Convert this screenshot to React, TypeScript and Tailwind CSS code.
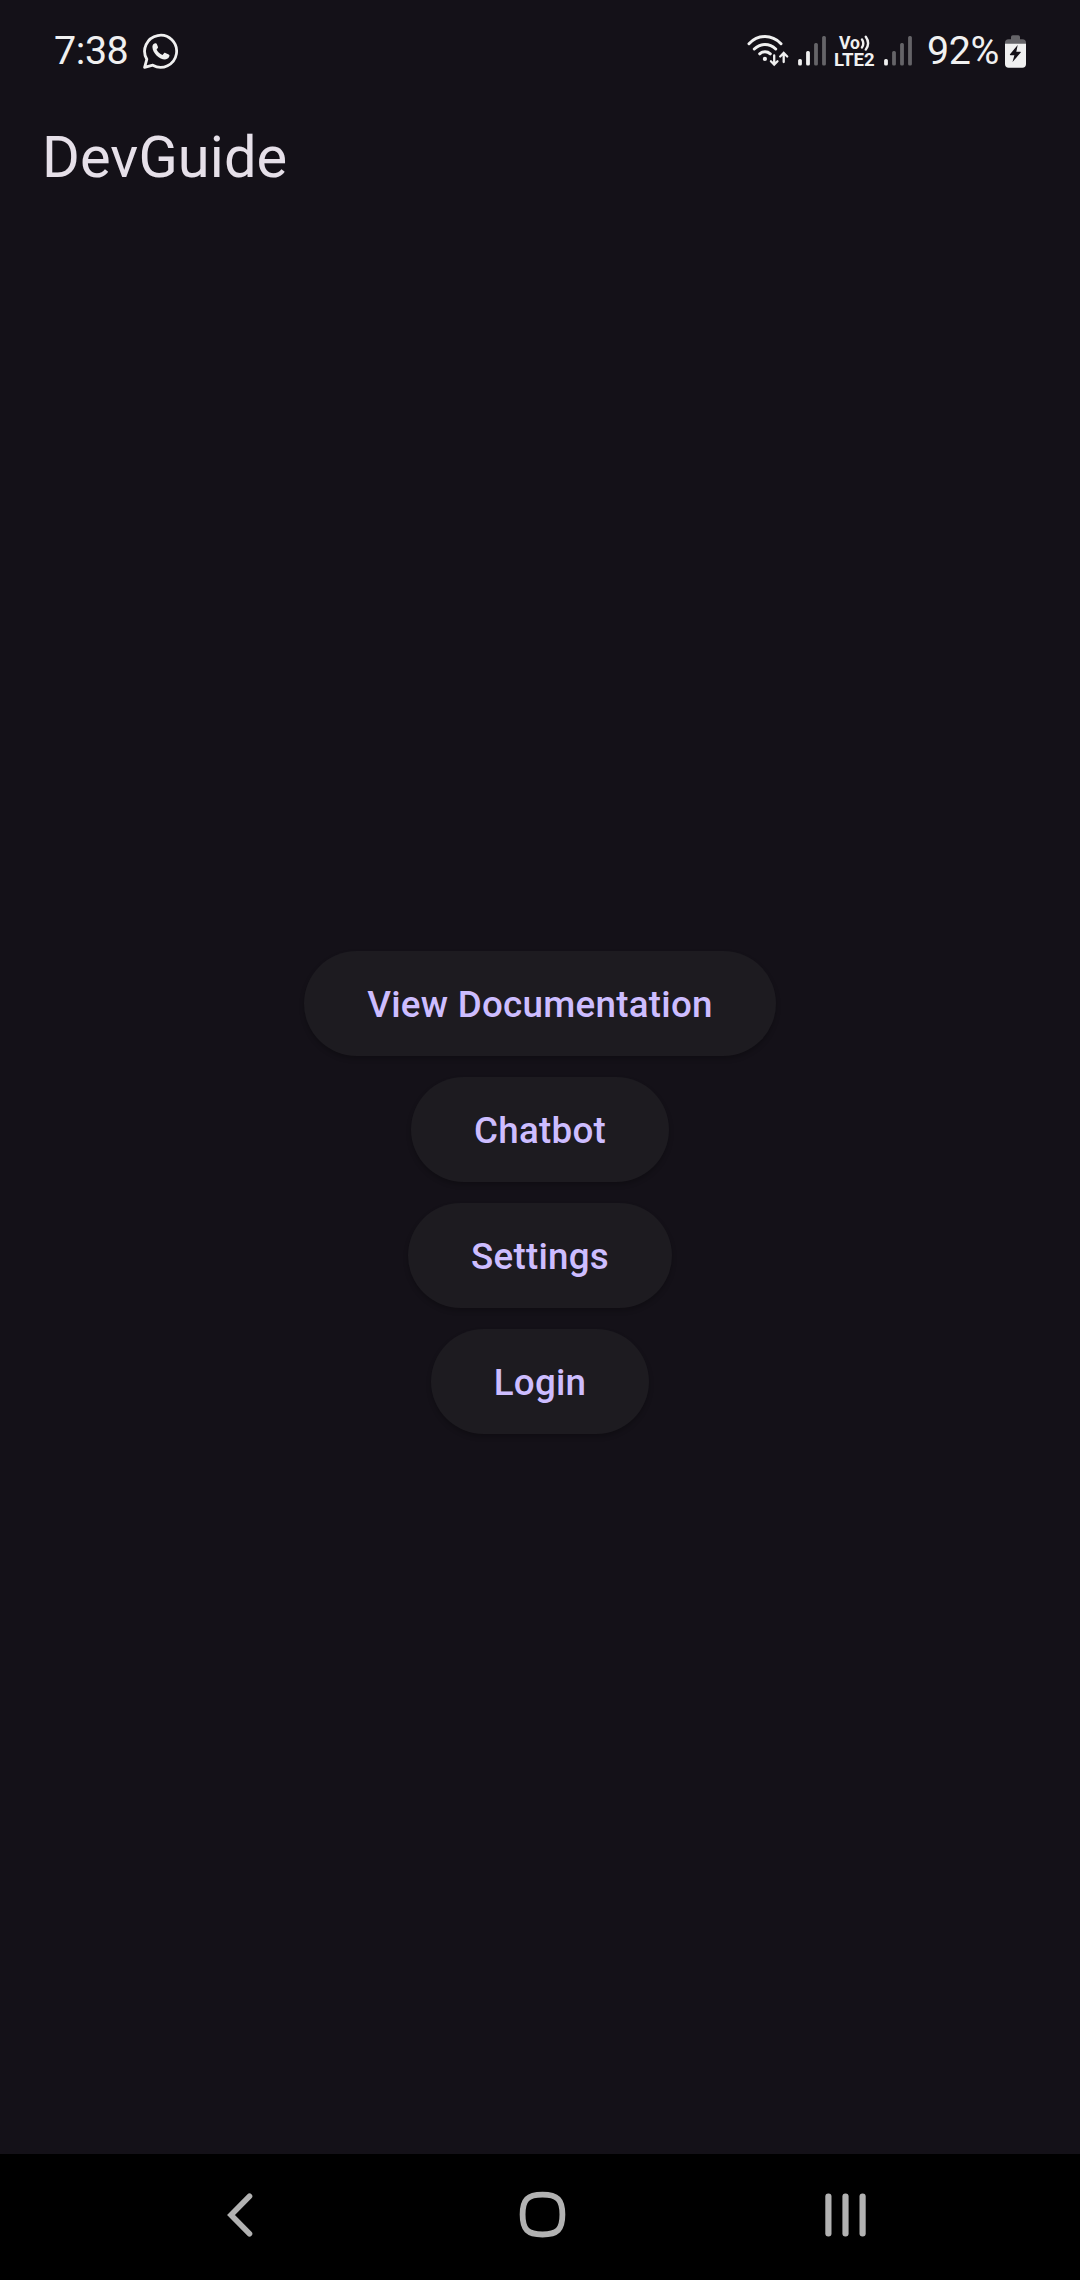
const actions = ["View Documentation", "Chatbot", "Settings", "Login"];

function WhatsAppIcon() {
  return (
    <svg className="h-[36px] w-[36px]" viewBox="0 0 36 36" fill="none">
      <path
        d="M1.6 34.3 L3.8 26.3 A16 16 0 1 1 9.8 32.2 Z"
        stroke="#f0f0f0"
        strokeWidth="2.8"
        strokeLinejoin="round"
      />
      <path
        d="M12.2 10.2C10.4 10.4 9.3 12 9.4 14C9.7 20.6 16.6 26.4 22 26.4C24.4 26.3 26.4 24.9 26.5 22.6C26.5 22 26.2 21.7 25.7 21.4L22.4 19.9C21.8 19.6 21.4 19.8 21 20.2L19.5 22C16.9 21 14.6 18.8 13.6 16.6L14.8 15C15.1 14.5 15.1 14.1 14.9 13.7L13.7 10.8C13.4 10.2 12.9 10.1 12.2 10.2Z"
        fill="#f0f0f0"
      />
    </svg>
  );
}

function WifiIcon() {
  return (
    <svg className="h-[34px] w-[43px]" viewBox="746 34 43 34" fill="none" stroke="#f0f0f0" strokeWidth="3" strokeLinecap="round">
      <path d="M749 43.7Q756 36.6 765 36.6T781 43.7" />
      <path d="M754.3 49Q759 44.4 765 44.4T775.7 49" />
      <path d="M759.7 53.8Q762 51.7 765 51.7T770.3 53.8" />
      <circle cx="764.9" cy="58.9" r="2.1" fill="#f0f0f0" stroke="none" />
      <path d="M774.2 55.5V64M770.9 61.2L774.2 64.5L777.5 61.2" strokeWidth="2.3" />
      <path d="M783.7 62V53.5M780.2 56.5L783.7 53L787.2 56.5" strokeWidth="2.3" />
    </svg>
  );
}

function Signal({ lit }: { lit: number }) {
  const heights = [6.5, 14.5, 22.5, 29.5];
  return (
    <svg className="h-[30px] w-[28px]" viewBox="0 0 28 30">
      {heights.map((h, i) => (
        <rect key={h} x={0.1 + i * 8} y={29.5 - h} width="3.8" height={h} rx="1.5" fill={i < lit ? "#f0f0f0" : "#656468"} />
      ))}
    </svg>
  );
}

function VolteBadge() {
  return (
    <div className="flex w-[42px] flex-col pt-px font-bold text-[#f0f0f0]">
      <div className="flex h-[16px] items-center pl-[5px]">
        <span className="text-[17.6px] leading-[16px]">Vo</span>
        <svg className="h-[16px] w-[10px] shrink-0" viewBox="0 0 10 16" fill="none" stroke="#f0f0f0" strokeWidth="2.4" strokeLinecap="round">
          <path d="M2 4.4Q4.6 8.4 2 12.4M5.8 1.8Q10.4 8.4 5.8 14.6" />
        </svg>
      </div>
      <span className="h-[18px] text-[18.6px] leading-[18px]">LTE2</span>
    </div>
  );
}

function BatteryIcon() {
  return (
    <svg className="h-[33px] w-[21px]" viewBox="0 0 21 33">
      <path d="M6 2Q6 .2 7.8 .2H13.2Q15 .2 15 2V4.3H17.5Q21 4.3 21 7.8V9H0V7.8Q0 4.3 3.5 4.3H6Z" fill="#656468" />
      <path d="M0 8.7H21V29Q21 32.7 17.3 32.7H3.7Q0 32.7 0 29Z" fill="#f0f0f0" />
      <path d="M12.7 10L5 19.3Q4.6 20.2 5.5 20.2H9.4L7.5 27L15.7 17.6Q16.2 16.7 15.2 16.7H11.3Z" fill="#141118" />
    </svg>
  );
}

function StatusBar() {
  return (
    <header className="flex h-[102px] items-center justify-between pl-[54px] pr-[54px] text-[#f0f0f0]">
      <div className="flex items-center">
        <span className="w-[89px] text-[39.4px] leading-[46px] tracking-[-0.4px]">7:38</span>
        <WhatsAppIcon />
      </div>
      <div className="flex items-center">
        <WifiIcon />
        <div className="ml-[9px]"><Signal lit={2} /></div>
        <div className="ml-[8px]"><VolteBadge /></div>
        <div className="ml-[8px]"><Signal lit={1} /></div>
        <span className="ml-[15px] w-[78px] whitespace-nowrap text-[39.4px] leading-[46px] tracking-[-0.4px]">92%</span>
        <BatteryIcon />
      </div>
    </header>
  );
}

function NavigationBar() {
  return (
    <nav className="flex h-[126px] items-center bg-black pb-[5px] pl-[227px]">
      <button aria-label="Back">
        <svg className="h-[48px] w-[26px]" viewBox="0 0 26 48" fill="none" stroke="#b2b2b2" strokeWidth="5.6" strokeLinecap="round">
          <path d="M22.5 5.3L4 24L22.5 42.7" />
        </svg>
      </button>
      <button aria-label="Home" className="ml-[266px]">
        <svg className="h-[48px] w-[48px]" viewBox="0 0 48 48" fill="none" stroke="#b2b2b2" strokeWidth="5.8">
          <path d="M23.5 3.7C38.5 3.7 43.4 8.6 43.4 23.6S38.5 43.5 23.5 43.5S3.6 38.6 3.6 23.6S8.5 3.7 23.5 3.7Z" />
        </svg>
      </button>
      <button aria-label="Recents" className="ml-[258px]">
        <svg className="h-[48px] w-[42px]" viewBox="0 0 42 48" fill="#b2b2b2">
          <rect x="0.3" y="2.5" width="6.2" height="43" rx="3" />
          <rect x="17.4" y="2.5" width="6.2" height="43" rx="3" />
          <rect x="34.5" y="2.5" width="6.2" height="43" rx="3" />
        </svg>
      </button>
    </nav>
  );
}

export default function App() {
  return (
    <div className="flex h-[2280px] w-[1080px] flex-col bg-[#141118] font-['Roboto',sans-serif]">
      <StatusBar />
      <div className="px-[42px] pt-[20px]">
        <h1 className="text-[57.75px] font-normal leading-[70px] tracking-[0.1px] text-[#e6e0e9]">DevGuide</h1>
      </div>
      <main className="flex flex-1 flex-col items-center gap-[21px] pt-[759.4px]">
        {actions.map((label) => (
          <button
            key={label}
            className="h-[105px] rounded-full bg-[#1d1b20] px-[63px] pt-[2px] text-[36.75px] font-medium tracking-[0.2625px] text-[#cdbdff] shadow-[0_3px_5px_rgba(0,0,0,0.22)]"
          >
            {label}
          </button>
        ))}
      </main>
      <NavigationBar />
    </div>
  );
}
